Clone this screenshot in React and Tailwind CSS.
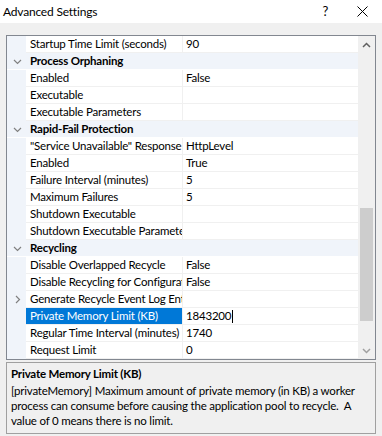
const FONT = "font-['Lato','Noto_Sans',sans-serif]";

const rows = [
  { name: "Startup Time Limit (seconds)", value: "90" },
  { cat: "Process Orphaning" },
  { name: "Enabled", value: "False" },
  { name: "Executable", value: "" },
  { name: "Executable Parameters", value: "" },
  { cat: "Rapid-Fail Protection" },
  { name: '"Service Unavailable" Response Type', value: "HttpLevel" },
  { name: "Enabled", value: "True" },
  { name: "Failure Interval (minutes)", value: "5" },
  { name: "Maximum Failures", value: "5" },
  { name: "Shutdown Executable", value: "" },
  { name: "Shutdown Executable Parameters", value: "" },
  { cat: "Recycling" },
  { name: "Disable Overlapped Recycle", value: "False" },
  { name: "Disable Recycling for Configuration Changes", value: "False" },
  { name: "Generate Recycle Event Log Entry", value: "", expand: true },
  { name: "Private Memory Limit (KB)", value: "1843200", selected: true },
  { name: "Regular Time Interval (minutes)", value: "1740" },
  { name: "Request Limit", value: "0" },
];

function Chevron({ dir }) {
  return (
    <svg width="9" height="9" viewBox="0 0 9 9" className="text-[#808080]">
      {dir === "down" ? (
        <path d="M1 3 L4.5 6.5 L8 3" fill="none" stroke="currentColor" strokeWidth="1.2" />
      ) : (
        <path d="M3 1 L6.5 4.5 L3 8" fill="none" stroke="currentColor" strokeWidth="1.2" />
      )}
    </svg>
  );
}

function Row({ row }) {
  if (row.cat) {
    return (
      <div className="flex h-[17px] shrink-0 border-b border-white bg-[#f0f4fa]">
        <div className="flex w-[19px] shrink-0 items-center justify-center pl-[1px]">
          <Chevron dir="down" />
        </div>
        <div className="flex items-center pl-[4px] text-[11.5px] font-bold tracking-[-0.2px] text-black">
          {row.cat}
        </div>
      </div>
    );
  }
  return (
    <div className="flex h-[17px] shrink-0">
      <div className="flex w-[19px] shrink-0 items-center justify-center bg-[#f0f4fa] pl-[1px]">
        {row.expand ? <Chevron dir="right" /> : null}
      </div>
      <div
        className={
          row.selected
            ? "w-[157px] shrink-0 overflow-hidden whitespace-nowrap border-r border-b border-[#f0f0f0] bg-[#0078d7] pl-[4px] text-[11.5px] leading-[16px] tracking-[-0.2px] text-white"
            : "w-[157px] shrink-0 overflow-hidden whitespace-nowrap border-r border-b border-[#f0f0f0] pl-[4px] text-[11.5px] leading-[16px] tracking-[-0.2px] text-black"
        }
      >
        {row.name}
      </div>
      <div className="flex min-w-0 flex-1 items-center border-b border-[#f0f0f0] pl-[3px] text-[11.5px] tracking-[-0.2px] text-black">
        {row.value}
        {row.selected ? <span className="ml-[1px] inline-block h-[13px] w-px bg-black" /> : null}
      </div>
    </div>
  );
}

export default function App() {
  return (
    <div className={`${FONT} flex h-[436px] w-[382px] flex-col bg-[#f0f0f0] text-black`}>
      <div className="flex h-[23px] shrink-0 items-center bg-white pl-[3px] pr-[14px] text-[12px] tracking-[-0.2px]">
        <span>Advanced Settings</span>
        <span className="ml-auto mr-[29px] text-[13px]">?</span>
        <svg width="11" height="11" viewBox="0 0 11 11">
          <path d="M0.5 0.5 L10.5 10.5 M10.5 0.5 L0.5 10.5" stroke="#000" strokeWidth="1" />
        </svg>
      </div>

      <div className="mx-[6px] mt-[12px] flex h-[325px] shrink-0 border border-[#828790] bg-white">
        <div className="flex min-w-0 flex-1 flex-col overflow-hidden">
          {rows.map((r, i) => (
            <Row key={i} row={r} />
          ))}
        </div>
        <div className="flex w-[17px] shrink-0 flex-col bg-[#f0f0f0]">
          <div className="flex h-[17px] items-center justify-center">
            <svg width="9" height="6" viewBox="0 0 9 6">
              <path d="M1 5 L4.5 1.5 L8 5" fill="none" stroke="#606060" strokeWidth="1.5" />
            </svg>
          </div>
          <div className="flex-1 px-[2px] pt-[155px] pb-[21px]">
            <div className="h-full bg-[#cdcdcd]" />
          </div>
          <div className="flex h-[17px] items-center justify-center">
            <svg width="9" height="6" viewBox="0 0 9 6">
              <path d="M1 1 L4.5 4.5 L8 1" fill="none" stroke="#a0a0a0" strokeWidth="1.5" />
            </svg>
          </div>
        </div>
      </div>

      <div className="mx-[6px] mt-[2px] h-[72px] shrink-0 border border-[#a0a0a0] px-[4px] pt-[3px] text-[11.5px] leading-[15px] tracking-[-0.2px]">
        <div className="font-bold">Private Memory Limit (KB)</div>
        <p className="mt-[2px]">
          [privateMemory] Maximum amount of private memory (in KB) a worker process can consume
          before causing the application pool to recycle.&nbsp; A value of 0 means there is no limit.
        </p>
      </div>
    </div>
  );
}
